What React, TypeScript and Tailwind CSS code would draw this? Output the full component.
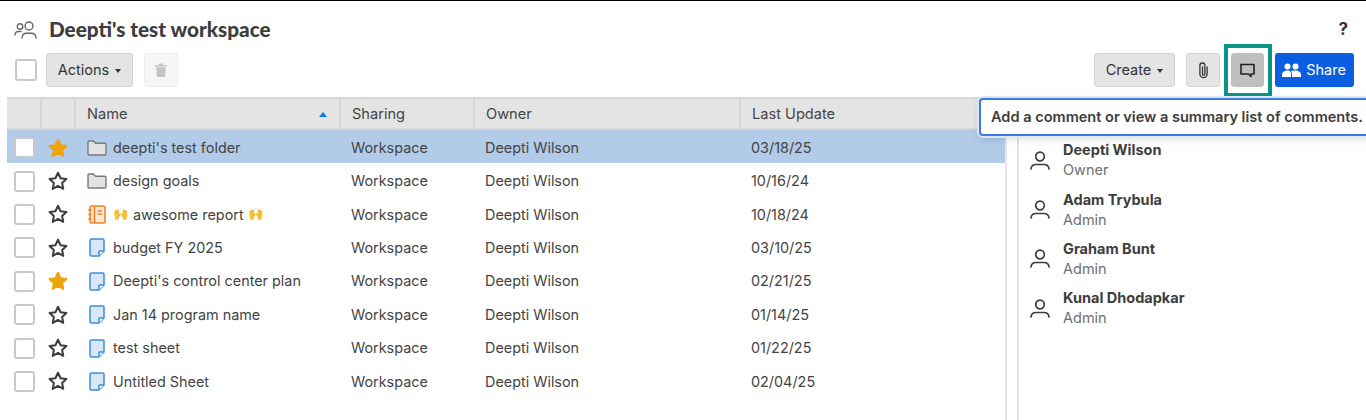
import React from 'react';

const rows = [
  { name: "deepti's test folder", icon: 'folder', date: '03/18/25', starred: true, selected: true },
  { name: 'design goals', icon: 'folder', date: '10/16/24' },
  { name: 'awesome report', icon: 'report', date: '10/18/24', emoji: '🙌' },
  { name: 'budget FY 2025', icon: 'sheet', date: '03/10/25' },
  { name: "Deepti's control center plan", icon: 'sheet', date: '02/21/25', starred: true },
  { name: 'Jan 14 program name', icon: 'sheet', date: '01/14/25' },
  { name: 'test sheet', icon: 'sheet', date: '01/22/25' },
  { name: 'Untitled Sheet', icon: 'sheet', date: '02/04/25' },
];

const members = [
  { name: 'Deepti Wilson', role: 'Owner' },
  { name: 'Adam Trybula', role: 'Admin' },
  { name: 'Graham Bunt', role: 'Admin' },
  { name: 'Kunal Dhodapkar', role: 'Admin' },
];

function Caret() {
  return <span className="ml-[6px] mt-[1px] h-0 w-0 border-x-[3px] border-t-[4px] border-x-transparent border-t-[#333]" />;
}

function Star({ filled }: { filled?: boolean }) {
  return (
    <svg width="22" height="22" viewBox="0 0 24 24" fill={filled ? '#eca60c' : 'none'} stroke={filled ? '#eca60c' : '#3d3d3d'} strokeWidth="2.2" strokeLinejoin="round">
      <path d="M12 3l2.800 6 6.400.8-4.700 4.400 1.200 6.400-5.700-3.200-5.700 3.200 1.200-6.400-4.700-4.400 6.400-.8z" />
    </svg>
  );
}

function FolderIcon() {
  return (
    <svg width="20" height="16" viewBox="0 0 20 16" fill="#e2e2e2" stroke="#7b7b7b" strokeWidth="1.4" strokeLinejoin="round">
      <path d="M1 2.200c0-.7.5-1.200 1.200-1.200h4.300l2 2.200h9.300c.7 0 1.200.5 1.200 1.200v9.400c0 .7-.5 1.200-1.200 1.200H2.200c-.7 0-1.200-.5-1.200-1.200z" />
    </svg>
  );
}

function ReportIcon() {
  return (
    <svg width="18" height="19" viewBox="0 0 18 19" fill="none" stroke="#f0842a" strokeWidth="1.6">
      <rect x="2" y="1" width="15" height="17" rx="1.5" fill="#fde9d4" />
      <path d="M6.500 1v17" />
      <path d="M9.500 6h4.500M9.500 9h4.500" />
      <path d="M.3 5h3.200M.3 9.500h3.200M.3 14h3.200" />
    </svg>
  );
}

function SheetIcon() {
  return (
    <svg width="16" height="19" viewBox="0 0 16 19" fill="#d9e6fa" stroke="#3b8ed8" strokeWidth="1.5" strokeLinejoin="round">
      <path d="M2.200 1h11.600c.7 0 1.200.5 1.200 1.200V13l-5 5H2.200c-.7 0-1.200-.5-1.200-1.200V2.200C1 1.500 1.500 1 2.200 1z" />
      <path d="M15 13h-4.300c-.4 0-.7.300-.7.700V18" fill="#fff" />
    </svg>
  );
}

function PersonIcon() {
  return (
    <svg width="20" height="19" viewBox="0 0 20 19" fill="none" stroke="#3d3d3d" strokeWidth="1.7" strokeLinecap="round">
      <circle cx="10" cy="5.500" r="4.300" />
      <path d="M1 18c.3-3 2.500-4.500 5-4.500h8c2.500 0 4.700 1.500 5 4.500" />
    </svg>
  );
}

function RowIcon({ type }: { type: string }) {
  if (type === 'folder') return <FolderIcon />;
  if (type === 'report') return <ReportIcon />;
  return <SheetIcon />;
}

function Checkbox({ className }: { className: string }) {
  return <span className={`block rounded-[3px] border-2 border-[#c9c9c9] bg-white ${className}`} />;
}

function Button({ children, className = '' }: { children: React.ReactNode; className?: string }) {
  return (
    <button className={`flex h-[34px] items-center justify-center rounded-[3px] border text-[14.5px] text-[#333] ${className}`}>
      {children}
    </button>
  );
}

function HeaderCell({ children, className = '' }: { children?: React.ReactNode; className?: string }) {
  return (
    <div className={`flex h-full items-center border-r-2 border-[#d6d6d6] pt-[2px] text-[14.6px] text-[#444] ${className}`}>
      {children}
    </div>
  );
}

export default function App() {
  return (
    <div className="relative flex h-[420px] w-[1366px] flex-col overflow-hidden border-t border-black bg-white font-['Inter',sans-serif]">
      {/* Title */}
      <div className="flex h-[52px] shrink-0 items-center pl-[14px] pr-[18px] pt-[5px]">
        <svg width="24" height="20" viewBox="0 0 24 20" fill="none" stroke="#666" strokeWidth="1.400" strokeLinecap="round">
          <circle cx="15" cy="6" r="4" />
          <path d="M8 18c.2-3 2-4.700 4.500-4.700h5c2.500 0 4.300 1.700 4.500 4.700" />
          <circle cx="6" cy="6.500" r="2.800" />
          <path d="M1 15c.2-2.200 1.400-3.500 3.300-3.500H7" />
        </svg>
        <h1 className="ml-[11px] font-['Lato',sans-serif] text-[20.7px] font-black text-[#3d3d3d]">Deepti's test workspace</h1>
        <span className="ml-auto text-[17px] font-bold text-[#333]">?</span>
      </div>

      {/* Toolbar */}
      <div className="flex h-[34px] shrink-0 items-center pl-[15px] pr-[12px]">
        <Checkbox className="mr-[9px] h-[22px] w-[22px]" />
        <Button className="w-[87px] border-[#d3d3d3] bg-[#e4e4e4]">
          Actions
          <Caret />
        </Button>
        <button className="ml-[11px] flex h-[34px] w-[34px] items-center justify-center rounded-[3px] border border-[#eeeeee] bg-[#f6f6f6]">
          <svg width="12" height="14" viewBox="0 0 12 14" fill="#c4c4c4">
            <path d="M0 2h12v1.500H0zM4 .500h4V2H4zM1.200 4.300h9.600L10 14H2z" />
          </svg>
        </button>
        <Button className="ml-auto w-[81px] border-[#d3d3d3] bg-[#e4e4e4]">
          Create
          <Caret />
        </Button>
        <Button className="ml-[11px] w-[33.5px] border-[#d3d3d3] bg-[#e4e4e4]">
          <svg width="12" height="17" viewBox="0 0 12 17" fill="none" stroke="#333" strokeWidth="1.300" strokeLinecap="round">
            <path d="M5.500 5v7a1.200 1.200 0 0 0 2.400 0V3.500a2.500 2.500 0 0 0-5 0V12a3.600 3.600 0 0 0 7.200 0V5" />
          </svg>
        </Button>
        <div className="relative ml-[11.5px] h-[34px] w-[33px]">
          <Button className="w-[33px] border-[#bfbfbf] bg-[#bfbfbf]">
            <svg width="15" height="15" viewBox="0 0 15 15" fill="none" stroke="#222" strokeWidth="1.600" strokeLinejoin="round">
              <path d="M1 1.500h13v9.500h-3v2.500l-2.500-2.500H1z" />
            </svg>
          </Button>
          <span className="pointer-events-none absolute -left-[7px] -top-[9px] h-[53px] w-[48px] border-[4px] border-[#0b9683]" />
        </div>
        <button className="ml-[11px] flex h-[34px] w-[79px] items-center justify-center gap-[5px] rounded-[3px] bg-[#0b5ee0] pr-[1px] text-[14.5px] text-white">
          <svg width="19" height="14" viewBox="0 0 19 14" fill="#fff">
            <circle cx="5.500" cy="3.500" r="3" />
            <circle cx="13.500" cy="3.500" r="3" />
            <path d="M0 14v-2c0-3 2.500-4.500 5.500-4.500S9 9 9 12v2zM10 14v-2c0-1.500-.3-3-1-4 1.300-.4 3-.5 4.500-.5 3 0 5.500 1.500 5.500 4.500v2z" />
          </svg>
          Share
        </button>
      </div>

      {/* Content */}
      <div className="mt-[10px] flex min-h-0 flex-1 pl-[7px]">
        <div className="w-[1000px] shrink-0 border-r-2 border-[#e6e6e6]">
          <div className="flex h-[33px] border-y-2 border-[#d6d6d6] bg-[#e4e4e4]">
            <HeaderCell className="w-[35px]" />
            <HeaderCell className="w-[34px]" />
            <HeaderCell className="w-[265px] justify-between pl-[11px] pr-[12px]">
              Name
              <span className="h-0 w-0 border-x-[4px] border-b-[5px] border-x-transparent border-b-[#0a7fe8]" />
            </HeaderCell>
            <HeaderCell className="w-[134px] pl-[11px]">Sharing</HeaderCell>
            <HeaderCell className="w-[266px] pl-[11px]">Owner</HeaderCell>
            <div className="flex flex-1 items-center pl-[11px] pt-[2px] text-[14.6px] text-[#444]">Last Update</div>
          </div>
          {rows.map((row) => (
            <div key={row.name} className={`flex h-[33.4px] items-center pt-[2px] text-[14.4px] text-[#444] ${row.selected ? 'bg-[#b2cbe9]' : ''}`}>
              <div className="flex w-[35px] justify-center">
                <Checkbox className="h-[21px] w-[21px]" />
              </div>
              <div className="flex w-[34px] justify-center pr-[3px]">
                <Star filled={row.starred} />
              </div>
              <div className="flex w-[264px] items-center">
                <div className="flex w-[37px] justify-center pl-[4px]">
                  <RowIcon type={row.icon} />
                </div>
                {row.emoji ? (
                  <span className="flex items-center gap-[4px]">
                    <span className="text-[12.5px]">{row.emoji}</span>
                    {row.name}
                    <span className="text-[12.5px]">{row.emoji}</span>
                  </span>
                ) : (
                  row.name
                )}
              </div>
              <div className="w-[134px] pl-[11px]">Workspace</div>
              <div className="w-[266px] pl-[11px]">Deepti Wilson</div>
              <div className="pl-[11px]">{row.date}</div>
            </div>
          ))}
        </div>

        {/* Members */}
        <div className="ml-[10px] flex-1 border-l-2 border-[#e2e2e2] pl-[11px] pt-[38.5px]">
          {members.map((m) => (
            <div key={m.name} className="flex h-[49.4px] items-center">
              <PersonIcon />
              <div className="ml-[13px]">
                <div className="text-[14.5px] font-bold leading-[20px] text-[#3d3d3d]">{m.name}</div>
                <div className="text-[14.5px] leading-[20px] text-[#6f6f6f]">{m.role}</div>
              </div>
            </div>
          ))}
        </div>
      </div>

      {/* Tooltip */}
      <div className="absolute left-[979px] top-[97px] flex h-[38px] w-[400px] items-center rounded-[4px] border-2 border-[#3f7ae0] bg-white pl-[10px] pt-[1px] text-[14.55px] font-semibold text-[#3d3d3d] shadow-[0_0_0_2px_#dbe6f8,0_3px_8px_rgba(0,0,0,0.15)]">
        Add a comment or view a summary list of comments.
      </div>
    </div>
  );
}
